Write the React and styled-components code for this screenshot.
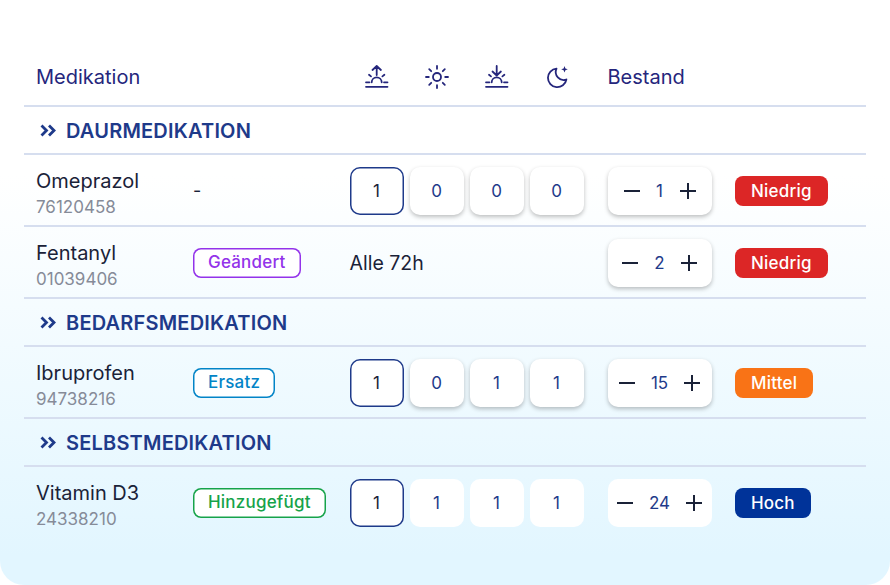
import React from "react";
import styled, { createGlobalStyle } from "styled-components";

const Global = createGlobalStyle`
  html, body { margin: 0; padding: 0; background: #fff; }
  body { font-family: "Inter", "Noto Sans", sans-serif; }
`;

const COLUMNS = "157px 156.5px 258px 127.5px 1fr";

const SunriseIcon = () => (
  <Svg viewBox="0 0 24 24">
    <path d="M11.700 10V1M7.500 5 11.700 1l4.200 4" />
    <path d="M6.700 17.300a5 5 0 0 1 10 0" />
    <path d="M1 17.300h3.500M19 17.300h3.500M1 21.800h21.500M4 9.800l2 1.600M19.400 9.800l-2 1.600" />
  </Svg>
);

const SunIcon = () => (
  <Svg viewBox="0 0 24 24">
    <circle cx="12" cy="12" r="4" />
    <path d="M12 1v2.800M12 20.200V23M1 12h2.800M20.200 12H23M4.200 4.200l2 2M17.800 17.800l2 2M4.200 19.800l2-2M17.800 6.200l2-2" />
  </Svg>
);

const SunsetIcon = () => (
  <Svg viewBox="0 0 24 24">
    <path d="M11.700 1v9.500M7.500 6.500l4.200 4 4.200-4" />
    <path d="M6.700 17.300a5 5 0 0 1 10 0" />
    <path d="M1 17.300h3.500M19 17.300h3.500M1 21.800h21.500M4 9.800l2 1.600M19.400 9.800l-2 1.600" />
  </Svg>
);

const MoonIcon = () => (
  <Svg viewBox="0 0 24 24">
    <path d="M11.500 3.600a9.300 9.300 0 1 0 9.900 10.900 8 8 0 0 1-9.900-10.900z" />
    <path
      d="M19.500 1l.9 2.400 2.400.9-2.400.9-.9 2.400-.9-2.400-2.400-.9 2.400-.9z"
      fill="#25267c"
      stroke="none"
    />
  </Svg>
);

const ChevronsIcon = () => (
  <Chevrons viewBox="0 0 16 13">
    <path d="M1.500 1.500l5 5-5 5M9 1.500l5 5-5 5" />
  </Chevrons>
);

const sections = [
  {
    title: "DAURMEDIKATION",
    rows: [
      { name: "Omeprazol", code: "76120458", dash: true, doses: [1, 0, 0, 0], stock: 1, level: "Niedrig" },
      { name: "Fentanyl", code: "01039406", tag: "Geändert", note: "Alle 72h", stock: 2, level: "Niedrig" },
    ],
  },
  {
    title: "BEDARFSMEDIKATION",
    rows: [{ name: "Ibruprofen", code: "94738216", tag: "Ersatz", doses: [1, 0, 1, 1], stock: 15, level: "Mittel" }],
  },
  {
    title: "SELBSTMEDIKATION",
    rows: [
      { name: "Vitamin D3", code: "24338210", tag: "Hinzugefügt", doses: [1, 1, 1, 1], stock: 24, level: "Hoch", flat: true },
    ],
  },
];

const tagColors = { Geändert: "#9333ea", Ersatz: "#0284c7", Hinzugefügt: "#16a34a" };
const levelColors = { Niedrig: "#dc2626", Mittel: "#f97316", Hoch: "#003399" };

const App = () => {
  return (
    <Card>
      <Global />
      <HeaderRow>
        <HeaderText>Medikation</HeaderText>
        <span />
        <IconCells>
          <IconCell><SunriseIcon /></IconCell>
          <IconCell><SunIcon /></IconCell>
          <IconCell><SunsetIcon /></IconCell>
          <IconCell><MoonIcon /></IconCell>
        </IconCells>
        <HeaderText>Bestand</HeaderText>
      </HeaderRow>
      {sections.map((section) => (
        <React.Fragment key={section.title}>
          <SectionRow>
            <ChevronsIcon />
            {section.title}
          </SectionRow>
          {section.rows.map((row) => (
            <Row key={row.code}>
              <NameCell>
                <Name>{row.name}</Name>
                <Code>{row.code}</Code>
              </NameCell>
              <div>
                {row.dash && <Dash>-</Dash>}
                {row.tag && <Tag $color={tagColors[row.tag]}>{row.tag}</Tag>}
              </div>
              {row.doses ? (
                <Doses>
                  {row.doses.map((dose, index) => (
                    <Dose key={index} $active={index === 0} $flat={row.flat}>
                      {dose}
                    </Dose>
                  ))}
                </Doses>
              ) : (
                <Note>{row.note}</Note>
              )}
              <Stepper $flat={row.flat}>
                <StepIcon viewBox="0 0 16 16">
                  <path d="M0 8h16" />
                </StepIcon>
                <StockValue>{row.stock}</StockValue>
                <StepIcon viewBox="0 0 16 16">
                  <path d="M0 8h16M8 0v16" />
                </StepIcon>
              </Stepper>
              <div>
                <Level $color={levelColors[row.level]}>{row.level}</Level>
              </div>
            </Row>
          ))}
        </React.Fragment>
      ))}
    </Card>
  );
};

const Card = styled.div`
  box-sizing: border-box;
  width: 890px;
  height: 585px;
  padding: 48px 24px 0;
  border-radius: 24px;
  background: linear-gradient(180deg, #ffffff 30%, #e2f6ff 95%);
  overflow: hidden;
`;

const HeaderRow = styled.div`
  display: grid;
  grid-template-columns: ${COLUMNS};
  align-items: center;
  height: 57px;
  padding-left: 12px;
  border-bottom: 2px solid #d6deef;
`;

const HeaderText = styled.div`
  font-size: 20px;
  color: #25267c;
`;

const IconCells = styled.div`
  display: flex;
  gap: 6px;
`;

const IconCell = styled.div`
  width: 54px;
  display: flex;
  justify-content: center;
`;

const Svg = styled.svg`
  width: 24px;
  height: 24px;
  fill: none;
  stroke: #25267c;
  stroke-width: 1.800;
  stroke-linecap: round;
  stroke-linejoin: round;
`;

const SectionRow = styled.div`
  display: flex;
  align-items: center;
  gap: 10px;
  height: 45px;
  padding: 1px 0 0 16px;
  border-bottom: 2px solid #d6deef;
  font-size: 20px;
  font-weight: 600;
  letter-spacing: 0.2px;
  color: #1e3a8a;
`;

const Chevrons = styled.svg`
  width: 16px;
  height: 13px;
  fill: none;
  stroke: #1e3a8a;
  stroke-width: 2.800;
`;

const Row = styled.div`
  display: grid;
  grid-template-columns: ${COLUMNS};
  align-items: center;
  height: 69px;
  padding: 1px 0 0 12px;
  border-bottom: 2px solid #d6deef;

  &:last-child {
    border-bottom: 0;
  }
`;

const NameCell = styled.div`
  padding-top: 6px;
`;

const Name = styled.div`
  font-size: 20px;
  line-height: 26px;
  color: #1a2238;
`;

const Code = styled.div`
  font-size: 17px;
  line-height: 26px;
  color: #868b98;
`;

const Dash = styled.span`
  font-size: 18px;
  color: #1a2238;
`;

const Tag = styled.span`
  display: inline-block;
  height: 30px;
  padding: 0 15px;
  line-height: 29px;
  font-size: 17px;
  font-weight: 500;
  letter-spacing: 0.2px;
  color: ${(props) => props.$color};
  box-shadow: inset 0 0 0 1.5px ${(props) => props.$color};
  border-radius: 8px;
  background: #fff;
`;

const Doses = styled.div`
  display: flex;
  gap: 6px;
`;

const Dose = styled.div`
  width: 54px;
  height: 48px;
  display: flex;
  align-items: center;
  justify-content: center;
  font-size: 17px;
  background: #fff;
  border-radius: 10px;
  color: ${(props) => (props.$active ? "#1a2238" : "#1e3a8a")};
  box-shadow: ${(props) =>
    props.$active
      ? "inset 0 0 0 1.500px #1e3a8a"
      : props.$flat
        ? "none"
        : "0 2px 4px rgba(0, 0, 0, 0.25)"};
`;

const Note = styled.div`
  font-size: 19.500px;
  color: #1a2238;
`;

const Stepper = styled.div`
  width: 104px;
  height: 48px;
  display: flex;
  align-items: center;
  justify-content: center;
  gap: 16px;
  background: #fff;
  border-radius: 10px;
  box-shadow: ${(props) => (props.$flat ? "none" : "0 2px 4px rgba(0, 0, 0, 0.25)")};
`;

const StepIcon = styled.svg`
  width: 16px;
  height: 16px;
  fill: none;
  stroke: #1a2238;
  stroke-width: 2;
`;

const StockValue = styled.span`
  min-width: 8px;
  text-align: center;
  font-size: 17px;
  color: #1e3a8a;
`;

const Level = styled.span`
  display: inline-block;
  height: 30px;
  padding: 0 16px;
  line-height: 30px;
  font-size: 17px;
  font-weight: 500;
  letter-spacing: 0.2px;
  color: #fff;
  background: ${(props) => props.$color};
  border-radius: 8px;
`;

export default App;
